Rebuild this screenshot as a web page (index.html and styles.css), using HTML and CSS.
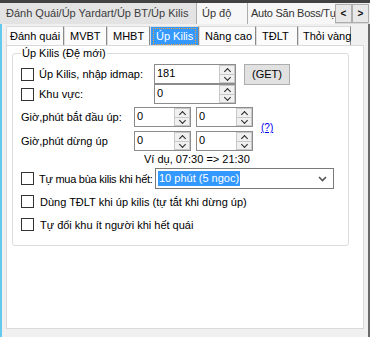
FILE: index.html
```html
<!DOCTYPE html>
<html lang="vi">
<head>
    <meta charset="UTF-8">
    <title>Úp Kilis</title>
    <link rel="stylesheet" href="styles.css">
</head>
<body>
    <div class="window">
        <div class="topbar"></div>
        <div class="outer-tabs">
            <div class="otab otab-active">Đánh Quái/Úp Yardart/Úp BT/Úp Kilis</div>
            <div class="otab otab-mid">Úp độ</div>
            <div class="otab otab-clip">Auto Săn Boss/Tự</div>
            <span class="scroll-btn">&lt;</span>
            <span class="scroll-btn">&gt;</span>
        </div>
        <div class="outer-page">
            <div class="inner-tabs">
                <div class="itab">Đánh quái</div>
                <div class="itab">MVBT</div>
                <div class="itab">MHBT</div>
                <div class="itab itab-active"><span class="focus">Úp Kilis</span></div>
                <div class="itab">Nâng cao</div>
                <div class="itab">TĐLT</div>
                <div class="itab">Thỏi vàng</div>
            </div>
            <div class="inner-page">
                <fieldset class="group">
                    <legend>Úp Kilis (Đệ mới)</legend>

                    <div class="row row-first">
                        <span class="check"></span>
                        <span class="label label-check">Úp Kilis, nhập idmap:</span>
                        <div class="num num-wide">
                            <span class="num-value">181</span>
                            <span class="spin"><span class="spin-up"></span><span class="spin-down"></span></span>
                        </div>
                        <button class="btn">(GET)</button>
                    </div>

                    <div class="row row-second">
                        <span class="check"></span>
                        <span class="label label-check">Khu vực:</span>
                        <div class="num num-wide">
                            <span class="num-value">0</span>
                            <span class="spin"><span class="spin-up"></span><span class="spin-down"></span></span>
                        </div>
                    </div>

                    <div class="time-block">
                        <div class="time-rows">
                            <div class="row">
                                <span class="label label-time">Giờ,phút bắt đầu úp:</span>
                                <div class="num num-small">
                                    <span class="num-value">0</span>
                                    <span class="spin"><span class="spin-up"></span><span class="spin-down"></span></span>
                                </div>
                                <div class="num num-small">
                                    <span class="num-value">0</span>
                                    <span class="spin"><span class="spin-up"></span><span class="spin-down"></span></span>
                                </div>
                            </div>
                            <div class="row row-gap">
                                <span class="label label-time">Giờ,phút dừng úp</span>
                                <div class="num num-small">
                                    <span class="num-value">0</span>
                                    <span class="spin"><span class="spin-up"></span><span class="spin-down"></span></span>
                                </div>
                                <div class="num num-small">
                                    <span class="num-value">0</span>
                                    <span class="spin"><span class="spin-up"></span><span class="spin-down"></span></span>
                                </div>
                            </div>
                        </div>
                        <a class="help">(?)</a>
                    </div>

                    <div class="example">Ví dụ, 07:30 =&gt; 21:30</div>

                    <div class="row row-select">
                        <span class="check"></span>
                        <span class="label label-buy">Tự mua bùa kilis khi hết:</span>
                        <div class="select">
                            <span class="select-value">10 phút (5 ngoc)</span>
                            <svg class="select-arrow" width="9" height="6" viewBox="0 0 9 6"><polyline points="1,1 4.5,4.5 8,1" fill="none" stroke="#555" stroke-width="1.6"/></svg>
                        </div>
                    </div>

                    <div class="row row-option row-option-first">
                        <span class="check"></span>
                        <span class="label">Dùng TĐLT khi úp kilis (tự tắt khi dừng úp)</span>
                    </div>

                    <div class="row row-option">
                        <span class="check"></span>
                        <span class="label">Tự đổi khu ít người khi hết quái</span>
                    </div>
                </fieldset>
            </div>
        </div>
    </div>
</body>
</html>
```

FILE: styles.css
```css
* {
    margin: 0;
    padding: 0;
    box-sizing: border-box;
}

body {
    background: #f0f0f0;
    font-family: 'Liberation Sans', Arial, sans-serif;
    font-size: 11px;
    color: #000;
}

.window {
    width: 370px;
    height: 337px;
    display: flex;
    flex-direction: column;
    overflow: hidden;
}

.topbar {
    height: 3px;
    background: #424242;
}

/* outer tab strip */
.outer-tabs {
    height: 21px;
    display: flex;
    background: #f0f0f0;
    border-bottom: 1px solid #d9d9d9;
}

.otab {
    flex-shrink: 0;
    height: 21px;
    line-height: 20px;
    padding: 0 6px;
    color: #333;
    background: #f0f0f0;
    border-right: 1px solid #adadad;
    white-space: nowrap;
    overflow: hidden;
}

.otab-active {
    width: 197px;
    background: #e3e3e3;
    color: #3c3c3c;
}

.otab-mid {
    width: 51px;
    padding-left: 5px;
    background: #f7f7f7;
}

.otab-clip {
    width: 87px;
    padding: 0 0 0 3px;
    letter-spacing: -0.25px;
    border-right: none;
    background: #f7f7f7;
}

.scroll-btn {
    flex-shrink: 0;
    width: 17px;
    height: 19px;
    margin-top: 1px;
    border: 1px solid #adadad;
    background: #e8e8e8;
    font-weight: bold;
    font-size: 10px;
    line-height: 17px;
    text-align: center;
    color: #111;
}

/* outer page */
.outer-page {
    flex: 1;
    display: flex;
    flex-direction: column;
    border-left: 2px solid #62c9ef;
    border-right: 2px solid #6a6a6a;
    background: #f0f0f0;
    padding: 2px 4px 8px 4px;
}

.inner-tabs {
    height: 19px;
    display: flex;
}

.itab {
    flex-shrink: 0;
    height: 19px;
    line-height: 18px;
    padding-left: 5px;
    background: #fbfbfb;
    border-left: 1px solid #dcdcdc;
    border-right: 1px solid #8a8a8a;
    border-top: 1px solid #dcdcdc;
    white-space: nowrap;
}

.itab:nth-child(1) { width: 58px; padding-left: 3px; }
.itab:nth-child(2) { width: 43px; }
.itab:nth-child(3) { width: 43px; }
.itab:nth-child(4) { width: 49px; }
.itab:nth-child(5) { width: 57px; }
.itab:nth-child(6) { width: 42px; }
.itab:nth-child(7) { width: 53px; padding-left: 4px; }

.itab-active {
    background: #3399ff;
    color: #fff;
    padding: 1px 2px;
    line-height: 15px;
}

.focus {
    display: block;
    padding: 0 2px;
    border: 1px dotted #f0a040;
}

.inner-page {
    flex: 1;
    background: #fff;
    border: 1px solid #d9d9d9;
    padding: 1px 14px 0 5px;
}

/* group box */
.group {
    border: 1px solid #dcdcdc;
    border-radius: 3px;
    padding: 2px 0 9px 8px;
}

.group legend {
    padding: 0 1px;
    line-height: 13px;
}

.row {
    display: flex;
    align-items: center;
    height: 20px;
    margin-top: 2px;
}

.row-second {
    margin-top: 0;
}

.time-block .row:first-child {
    margin-top: 3px;
}

.time-block .row-gap {
    margin-top: 4px;
}

.check {
    width: 13px;
    height: 13px;
    border: 1px solid #333;
    background: #fff;
    flex-shrink: 0;
    margin-right: 5px;
}

.label {
    white-space: nowrap;
}

.label-check {
    width: 115px;
}

.label-time {
    width: 113px;
}

.label-buy {
    width: 116px;
    letter-spacing: -0.25px;
}

/* numeric up-down */
.num {
    display: flex;
    height: 20px;
    border: 1px solid #8c8c8c;
    background: #fff;
}

.num-wide {
    width: 82px;
}

.num-small {
    width: 57px;
    margin-right: 5px;
}

.num-value {
    flex: 1;
    padding-left: 2px;
    line-height: 17px;
}

.spin {
    width: 16px;
    display: flex;
    flex-direction: column;
    gap: 1px;
    background: #c8c8c8;
    padding: 1px;
}

.spin-up,
.spin-down {
    flex: 1;
    background: #f0f0f0;
    position: relative;
}

.spin-up::after,
.spin-down::after {
    content: '';
    position: absolute;
    left: 5px;
    width: 4px;
    height: 4px;
    border-left: 1.5px solid #222;
    border-top: 1.5px solid #222;
}

.spin-up::after {
    top: 3px;
    transform: rotate(45deg);
}

.spin-down::after {
    top: 0;
    transform: rotate(225deg);
}

.btn {
    margin-left: 8px;
    width: 46px;
    height: 21px;
    font-family: inherit;
    font-size: 11px;
    background: #e1e1e1;
    border: 1px solid #adadad;
    color: #000;
}

.time-block {
    display: flex;
    align-items: center;
}

.help {
    margin-left: 3px;
    color: #0000ee;
    text-decoration: underline;
    font-size: 10px;
}

.example {
    padding-left: 123px;
    line-height: 14px;
    margin-top: 1px;
}

.row-select {
    height: 21px;
    margin-top: 2px;
}

.select {
    width: 179px;
    height: 21px;
    border: 1px solid #7a7a7a;
    display: flex;
    align-items: center;
    justify-content: space-between;
    padding: 0 6px 0 2px;
}

.select-value {
    background: #3399ff;
    color: #fff;
    line-height: 15px;
    padding: 0 1px;
}

.row-option {
    height: 23px;
    margin-top: 0;
}

.row-option-first {
    margin-top: 1px;
}

.row-option .check {
    margin-right: 6px;
}
```
